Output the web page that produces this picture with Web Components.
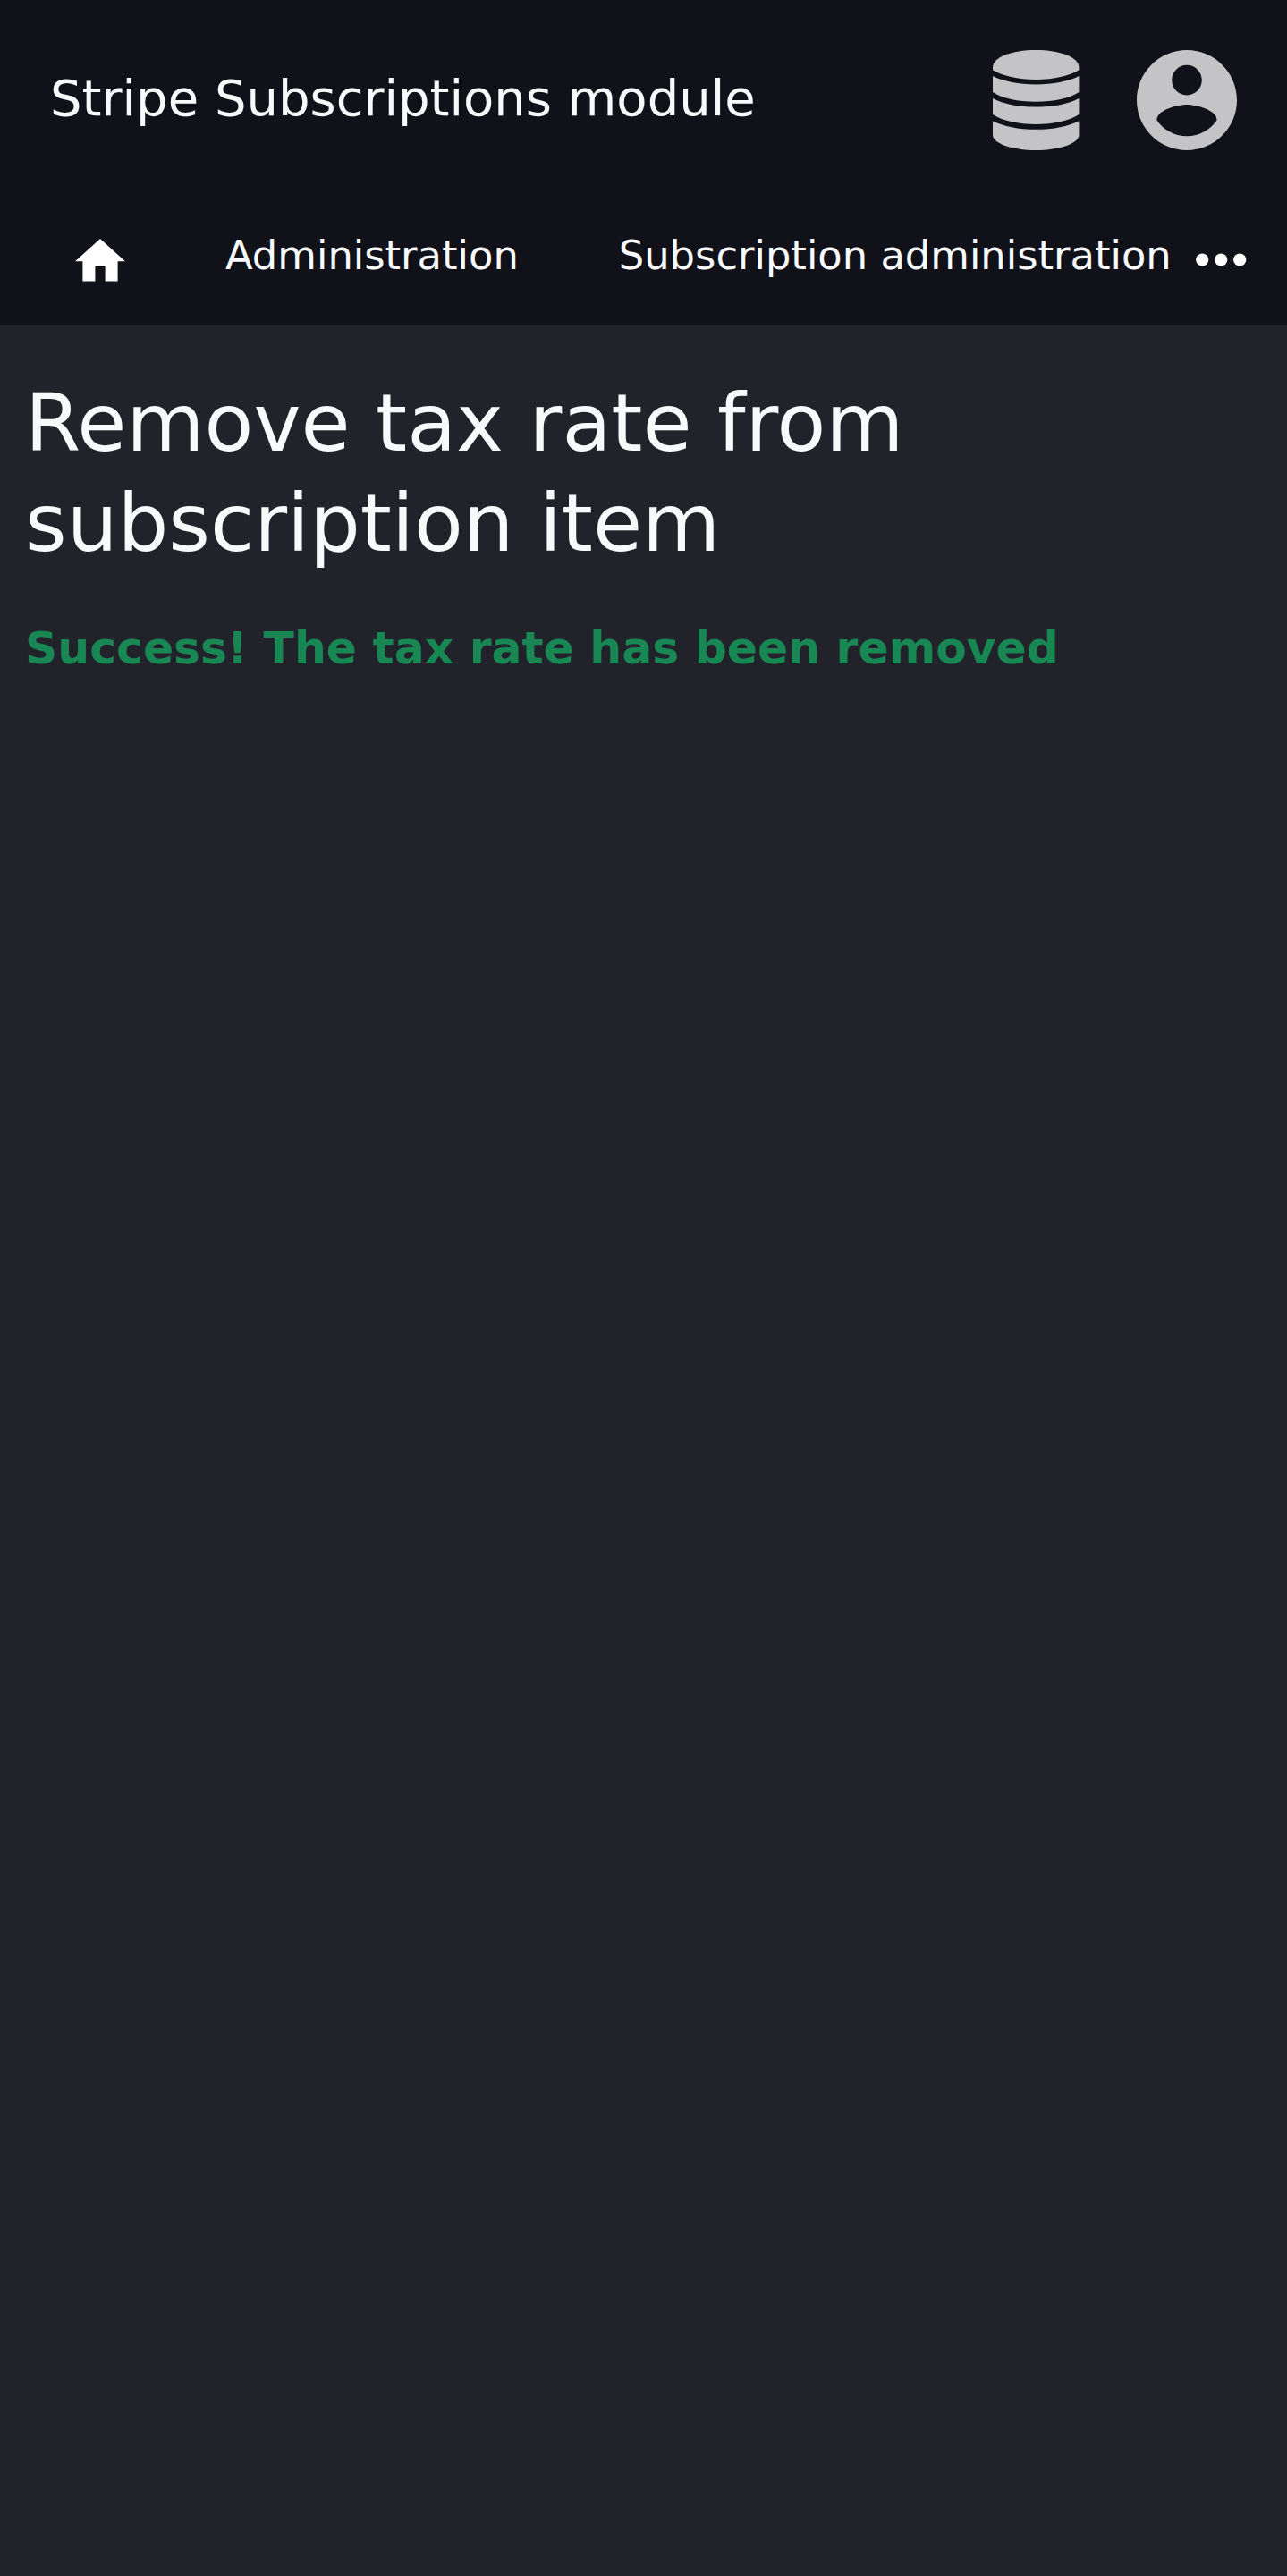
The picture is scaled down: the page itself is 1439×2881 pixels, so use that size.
<!DOCTYPE html>
<html lang="en">
<head>
<meta charset="utf-8">
<title>Stripe Subscriptions module</title>
<style>
html,body{margin:0;height:100%}
body{background:#22222b;color:#f8f9fa;font-family:"DejaVu Sans",sans-serif}
</style>
</head>
<body>
<app-shell>
  <app-header slot="header">Stripe Subscriptions module</app-header>
  <nav-bar slot="header">
    <nav-link>Administration</nav-link>
    <nav-link>Subscription administration</nav-link>
  </nav-bar>
  <page-title>Remove tax rate from subscription item</page-title>
  <success-message>Success! The tax rate has been removed</success-message>
</app-shell>
<script>
const define = (name, html) => customElements.define(name, class extends HTMLElement {
  constructor() {
    super();
    this.attachShadow({mode: "open"}).innerHTML = html;
  }
});

define("app-shell", `
<style>
:host{display:block;min-height:100%}
header{background:#11111a;height:364px;overflow:hidden}
main{padding:53px 28px}
</style>
<header><slot name="header"></slot></header>
<main><slot></slot></main>`);

define("app-header", `
<style>
:host{display:flex;align-items:center;height:224px;box-sizing:border-box;padding:0 56px;font-size:56px;line-height:84px}
.title{flex:1;white-space:nowrap;padding-bottom:4px}
.icons{display:flex;align-items:center;gap:64.3px}
</style>
<div class="title"><slot></slot></div>
<div class="icons"><database-icon></database-icon><account-icon></account-icon></div>`);

define("database-icon", `
<style>:host,svg{display:block}</style>
<svg width="96.4" height="112" viewBox="0 0 97 112" preserveAspectRatio="none" fill="#c4c4c6">
<path d="M0 19.5C0 8 21 0 48.5 0S97 8 97 19.5V22.3C86 29 69 33 48.5 33S11 29 0 22.3Z"/>
<path d="M0 29C12 35 29 38.4 48.5 38.4S85 35 97 29V47C86 54 69 57.8 48.5 57.8S11 54 0 47Z"/>
<path d="M0 54C12 60.300 29 63.600 48.500 63.600S85 60.300 97 54V72C86 79 69 82.900 48.500 82.900S11 79 0 72Z"/>
<path d="M0 79.200C12 85.400 29 88.800 48.500 88.800S85 85.400 97 79.200V95C97 104 76 112 48.500 112S0 104 0 95Z"/>
</svg>`);

define("account-icon", `
<style>:host,svg{display:block}</style>
<svg width="112" height="112" viewBox="2 2 20 20" fill="#c4c4c6">
<path d="M12 2C6.480 2 2 6.480 2 12s4.480 10 10 10 10-4.480 10-10S17.520 2 12 2zm0 3c1.660 0 3 1.340 3 3s-1.340 3-3 3-3-1.340-3-3 1.340-3 3-3zm0 14.200c-2.500 0-4.710-1.280-6-3.220.030-1.990 4-3.080 6-3.080 1.990 0 5.970 1.090 6 3.080-1.290 1.940-3.500 3.220-6 3.220z"/>
</svg>`);

define("nav-bar", `
<style>
:host{display:flex;align-items:flex-start;height:140px;box-sizing:border-box;padding:28px 45px 0 84px}
svg{display:block;flex:none}
.home{margin:15px 56px 0 0}
.more{margin:31px 0 0 auto}
</style>
<svg class="home" width="56" height="47.6" viewBox="2 3 20 17" fill="#fff"><path d="M10 20v-6h4v6h5v-8h3L12 3 2 12h3v8z"/></svg>
<slot></slot>
<svg class="more" width="57" height="15" viewBox="0 0 57 15" fill="#fff"><circle cx="7.200" cy="7.500" r="7.100"/><circle cx="28.200" cy="7.500" r="7.100"/><circle cx="49.200" cy="7.500" r="7.100"/></svg>`);

define("nav-link", `
<style>:host{display:block;flex:none;font-size:44.8px;line-height:67.2px;padding:0 56px;white-space:nowrap}
:host(:last-of-type){padding-right:0}</style>
<slot></slot>`);

define("page-title", `
<style>:host{display:block}h1{margin:0;font-size:89.6px;line-height:112px;font-weight:400}</style>
<h1><slot></slot></h1>`);

define("success-message", `
<style>:host{display:block;margin-top:46px;font-size:50.4px;line-height:75.6px;font-weight:700;color:#198754}</style>
<slot></slot>`);
</script>
</body>
</html>
